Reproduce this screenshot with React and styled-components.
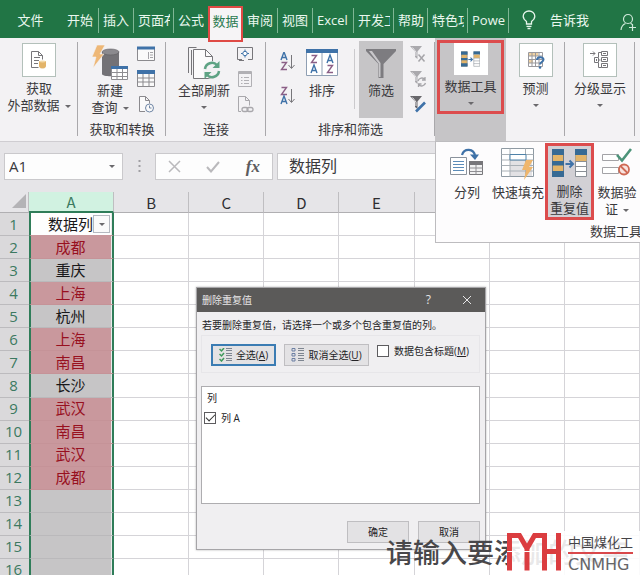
import React from "react";
import styled, { createGlobalStyle, css } from "styled-components";

const Global = createGlobalStyle`
  * { box-sizing: border-box; }
  body { margin: 0; background: #fff; }
  button, input { font: inherit; color: inherit; margin: 0; }
  svg { display: block; flex: none; }
`;

const Page = styled.div`
  display: flex;
  flex-direction: column;
  position: relative;
  height: 100vh;
  overflow: hidden;
  background: #fff;
  color: #3a393c;
  font-family: "Open Sans", "Noto Sans CJK SC", sans-serif;
  font-size: 13px;
  line-height: 17px;
`;

/* ---------- tabs ---------- */
const TabBar = styled.nav`
  display: flex;
  flex: none;
  height: 38px;
  background: #217545;
  color: #e9f7ee;
`;

const Tab = styled.button`
  width: ${(p) => p.$w}px;
  height: 25px;
  margin-top: 8px;
  padding: 0 3px 0 4px;
  border: 0;
  border-right: 1px solid ${(p) => (p.$line ? "#7fb694" : "transparent")};
  background: none;
  text-align: ${(p) => (p.$center ? "center" : "left")};
  flex: none;
  ${(p) =>
    p.$active &&
    css`
      position: relative;
      z-index: 2;
      height: 36px;
      margin-top: 6px;
      padding: 0 0 6px;
      border: 2px solid #df4a45;
      background: #f6f4f6;
      color: #2a7a4f;
      text-align: center;
    `}
`;

const TabText = styled.span`
  display: block;
  overflow: hidden;
  white-space: nowrap;
`;

const TellMe = styled.button`
  display: flex;
  align-items: center;
  gap: 14px;
  margin: 2px auto 0 13px;
  padding: 0;
  border: 0;
  background: none;
`;

const Account = styled.button`
  padding: 0;
  margin: 6px 3px 0 0;
  border: 0;
  background: none;
`;

/* ---------- ribbon ---------- */
const Ribbon = styled.div`
  display: flex;
  flex: none;
  height: 104px;
  background: #f3f2f4;
  border-bottom: 1px solid #cfcdd1;
`;

const Group = styled.section`
  position: relative;
  display: flex;
  flex-direction: column;
  flex: none;
  width: ${(p) => p.$w}px;
  background: ${(p) => (p.$open ? "#c6c5c7" : "none")};
  &::after {
    content: "";
    position: absolute;
    right: 0;
    top: 4px;
    bottom: 5px;
    width: 1px;
    background: ${(p) => (p.$open ? "transparent" : "#a9a8ab")};
  }
`;

const GroupBody = styled.div`
  display: flex;
  flex: 1;
  padding-left: ${(p) => p.$pad || 0}px;
`;

const GroupLabel = styled.div`
  height: 20px;
  text-align: center;
  white-space: nowrap;
`;

const Big = styled.button`
  display: flex;
  flex-direction: column;
  align-items: center;
  width: ${(p) => (p.$w ? p.$w + "px" : "100%")};
  height: 77px;
  margin-top: 3px;
  padding: 2px 0 0;
  border: 0;
  background: ${(p) => (p.$pressed ? "#c6c5c7" : "none")};
  white-space: nowrap;
  flex: none;
`;

const IconSlot = styled.span`
  display: flex;
  align-items: center;
  justify-content: center;
  height: 39px;
`;

const Framed = styled.button`
  display: flex;
  flex-direction: column;
  align-items: center;
  height: 74px;
  margin: 2px ${(p) => (p.$marked ? 2 : 0)}px 0;
  padding: ${(p) => (p.$marked ? 0 : 3)}px 0 0;
  flex: 1;
  border: ${(p) => (p.$marked ? "3px solid #dc4c4d" : "0")};
  background: none;
  white-space: nowrap;
`;

const Frame = styled.span`
  display: flex;
  align-items: center;
  justify-content: center;
  width: 34px;
  height: 34px;
  margin-bottom: 3px;
  border: 1px solid ${(p) => (p.$plain ? "#fff" : "#b3c0ba")};
  background: #fff;
`;

const Caret = styled.span`
  display: inline-block;
  width: 0;
  height: 0;
  vertical-align: middle;
  margin-left: ${(p) => (p.$after ? 5 : 0)}px;
  border: 3px solid transparent;
  border-top-color: #6a696c;
  border-bottom: 0;
`;

const CaretLine = styled.span`
  display: flex;
  height: 17px;
  align-items: center;
`;

const SmallStack = styled.div`
  display: flex;
  flex-direction: column;
  gap: 7px;
  margin: 7px 0 0 ${(p) => p.$ml}px;
`;

const SmallButton = styled.button`
  display: flex;
  width: 18px;
  height: 18px;
  padding: 0;
  border: 0;
  background: none;
`;

const SortStack = styled.div`
  display: flex;
  flex-direction: column;
  gap: 14px;
  margin-top: 14px;
`;

const SortButton = styled.button`
  padding: 0;
  border: 0;
  width: 16px;
  height: 20px;
  background: none;
`;

const ThinLine = styled.span`
  width: 1px;
  height: 60px;
  margin: 11px 4px 0 6px;
  background: #cbcacd;
`;

/* ---------- drop-down panel ---------- */
const Panel = styled.div`
  position: absolute;
  z-index: 5;
  left: 0;
  top: 103px;
  width: 216px;
  height: 102px;
  background: #fdfcfd;
  border: 1px solid #bdbcbf;
`;

const PanelItems = styled.div`
  display: flex;
  padding-left: 7px;
`;

const PanelButton = styled.button`
  display: flex;
  flex-direction: column;
  align-items: center;
  width: ${(p) => p.$w}px;
  height: 77px;
  margin-top: 1px;
  padding: ${(p) => (p.$marked ? 3 : 5)}px 0 0;
  border: ${(p) => (p.$marked ? "3px solid #dc4c4d" : "0")};
  background: ${(p) => (p.$marked ? "#d2d0d5" : "none")};
  white-space: nowrap;
  flex: none;
`;

const PanelIcon = styled.span`
  display: flex;
  height: ${(p) => (p.$marked ? 35 : 36)}px;
`;

const PanelLabel = styled.div`
  padding: 3px 8px 0 0;
  text-align: right;
`;

/* ---------- formula bar ---------- */
const FormulaBar = styled.div`
  display: flex;
  flex: none;
  height: 50px;
  padding: 11px 0 12px 4px;
  background: #e6e5e8;
`;

const NameBox = styled.div`
  display: flex;
  align-items: center;
  width: 119px;
  padding: 0 7px 0 4px;
  border: 1px solid #cac9cc;
  background: #fdfdfd;
  font-size: 15px;
`;

const NameInput = styled.input`
  flex: 1;
  min-width: 0;
  padding: 0;
  border: 0;
  background: none;
  outline: 0;
`;

const PlainButton = styled.button`
  display: flex;
  align-items: center;
  padding: 0;
  border: 0;
  background: none;
`;

const Grip = styled.span`
  display: flex;
  align-items: center;
  justify-content: center;
  width: 32px;
`;

const EditTools = styled.div`
  display: flex;
  align-items: center;
  justify-content: space-between;
  width: 118px;
  padding: 0 12px;
  border: 1px solid #cac9cc;
  background: #fdfdfd;
`;

const FormulaInput = styled.input`
  flex: 1;
  min-width: 0;
  margin-left: 4px !important;
  padding: 0 11px;
  border: 1px solid #cac9cc;
  border-right: 0;
  background: #fdfdfd;
  font-size: 16px !important;
  outline: 0;
`;

/* ---------- sheet ---------- */
const Sheet = styled.table`
  flex: none;
  width: 100%;
  height: 390px;
  table-layout: fixed;
  border-collapse: separate;
  border-spacing: 0;
  font-size: 15px;
  line-height: 19px;
`;

const NumCol = styled.col`
  width: 29px;
`;
const ACol = styled.col`
  width: 85px;
`;

const ColHead = styled.th`
  height: 19px;
  padding: 0;
  background: ${(p) => (p.$on ? "#d1f2e1" : "#e6e5e8")};
  color: ${(p) => (p.$on ? "#3b7a60" : "#2f2e31")};
  border-right: 1px solid #bfbec1;
  border-bottom: ${(p) => (p.$on ? "2px solid #2f7d59" : "1px solid #b0afb2")};
  font-weight: 400;
  font-family: "Noto Sans CJK SC", sans-serif;
`;

const Corner = styled.th`
  padding: 0 2px 2px 0;
  background: #e6e5e8;
  border-right: 1px solid #bfbec1;
  border-bottom: 1px solid #b0afb2;
  svg {
    margin-left: auto;
  }
`;

const RowHead = styled.th`
  padding: 0 2px 0 0;
  background: #dad9db;
  color: #3c7961;
  border-bottom: 1px solid #bcbbbe;
  font-weight: 400;
`;

const Cell = styled.td`
  padding: 0;
  border-right: 1px solid #d5d4d8;
  border-bottom: 1px solid #d5d4d8;
`;

const fills = { dup: "#c9989d", head: "#fefefe", plain: "#c6c5c6" };

const ACell = styled.td`
  padding: 0 2px 0 0;
  text-align: center;
  white-space: nowrap;
  background: ${(p) => fills[p.$kind]};
  color: ${(p) => (p.$kind === "dup" ? "#98101f" : "#19181a")};
  border-left: 2px solid #2f7d59;
  border-right: 2px solid #2f7d59;
  border-bottom: 1px solid
    ${(p) => (p.$kind === "dup" ? "#c59398" : p.$kind === "head" ? "#c9989d" : "#bab9bb")};
  box-shadow: inset -1px 0 #eceaec;
`;

const HeadCell = styled.div`
  display: flex;
  align-items: center;
  justify-content: flex-end;
`;

const FilterButton = styled.button`
  display: flex;
  align-items: center;
  justify-content: center;
  width: 17px;
  height: 18px;
  padding: 0;
  border: 1px solid #b5b9c0;
  background: #fafafa;
`;

/* ---------- dialog ---------- */
const Dialog = styled.div`
  position: absolute;
  z-index: 6;
  left: 196px;
  top: 287px;
  width: 290px;
  border: 1px solid #a6a5a8;
  background: #f0eff1;
  box-shadow: 0 0 2px rgba(0, 0, 0, 0.3);
  color: #242326;
  font-size: 10px;
  line-height: 14px;
`;

const TitleBar = styled.header`
  display: flex;
  align-items: center;
  height: 24px;
  padding: 0 13px 0 5px;
  background: #5b5a59;
  color: #e6e5e6;
`;

const Title = styled.span`
  flex: 1;
`;

const HelpButton = styled(PlainButton)`
  margin-right: 31px !important;
  font-size: 12px !important;
`;

const DialogBody = styled.div`
  padding: 6px 5px 6px 4px;
`;

const Prompt = styled.p`
  margin: 0;
  padding: 0 1px;
`;

const Options = styled.div`
  display: flex;
  align-items: flex-start;
  height: 38px;
  margin-top: 3px;
  padding: 8px 9px;
  border: 1px solid #e7e6e9;
`;

const PushButton = styled.button`
  display: flex;
  align-items: center;
  justify-content: center;
  gap: 3px;
  width: ${(p) => p.$w}px;
  height: 22px;
  padding: 0;
  border: ${(p) => (p.$focus ? "2px solid #3b7cb3" : "1px solid #bfbec1")};
  background: #e3e2e4;
  white-space: nowrap;
`;

const Access = styled.span`
  text-decoration: underline;
`;

const CheckLabel = styled.label`
  display: flex;
  align-items: center;
  gap: 5px;
  white-space: nowrap;
`;

const Check = styled.input`
  appearance: none;
  width: 12px;
  height: 12px;
  border: 1px solid #5d5c5f;
  background: #fff;
  display: grid;
  place-items: center;
  &:checked::before {
    content: "";
    width: 8px;
    height: 4px;
    margin-bottom: 3px;
    border: solid #333;
    border-width: 0 0 1px 1px;
    rotate: -45deg;
  }
`;

const ListBox = styled.div`
  height: 118px;
  margin-top: 13px;
  padding: 4px 2px;
  border: 1px solid #aeadb0;
  background: #fff;
`;

const ListHead = styled.div`
  padding: 0 3px;
  margin-bottom: 6px;
`;

const Actions = styled.div`
  display: flex;
  justify-content: flex-end;
  gap: 9px;
  margin-top: 17px;
`;

/* ---------- watermark ---------- */
const Caption = styled.div`
  position: absolute;
  z-index: 7;
  left: 386px;
  bottom: 5px;
  color: #48474a;
  font-size: 27px;
  font-weight: 500;
  line-height: 34px;
  white-space: nowrap;
`;

const Brand = styled.div`
  position: absolute;
  z-index: 8;
  right: 0;
  bottom: 0;
  display: flex;
  gap: 7px;
  width: 133px;
  height: 44px;
  padding-top: 2px;
  background: rgba(255, 255, 255, 0.88);
`;

const BrandText = styled.div`
  display: flex;
  flex-direction: column;
  color: #454447;
`;

const BrandName = styled.span`
  padding-bottom: 1px;
  border-bottom: 2px solid #d9484b;
  line-height: 18px;
  font-size: 13px;
`;

const BrandCode = styled.span`
  padding-top: 2px;
  color: #666568;
  font-family: "DejaVu Sans", sans-serif;
  font-size: 16px;
  line-height: 18px;
`;

/* ---------- icons ---------- */
const BLUE = "#3f72a8";
const GREY = "#77767a";
const TAN = "#e3b469";

const Svg = ({ w, h, children, ...rest }) => (
  <svg width={w} height={h} viewBox={`0 0 ${w} ${h}`} fill="none" aria-hidden="true" {...rest}>
    {children}
  </svg>
);

const BulbIcon = () => (
  <Svg w={14} h={20} stroke="#e6f5eb" strokeWidth="1.3">
    <path d="M4.5 14v-2.5C2.5 10 1.200 8.500 1.200 6.300a5.800 5.300 0 0 1 11.600 0c0 2.200-1.300 3.700-3.300 5.200V14z" />
    <path d="M4.500 16.300h5M5.500 18.500h3" />
  </Svg>
);

const PersonIcon = () => (
  <Svg w={17} h={19} stroke="#cfe8d9" strokeWidth="1.2">
    <circle cx="8" cy="6" r="4.500" />
    <path d="M1 17c.3-3.500 2-5.500 4.500-6.500M10.500 10.300l1.500 1M12.500 11v7M9 14.500h7" />
  </Svg>
);

const DocDataIcon = () => (
  <Svg w={18} h={20} stroke={GREY}>
    <path d="M1.500 17.500v-16h7l4 4v4M8.500 1.500v4h4M1.500 17.500h7" />
    <path d="M4 7.500h6M4 10.500h5M4 13.500h4" />
    <path d="M9.500 11.500v5c0 2 6 2 6 0v-5z" fill={TAN} stroke={TAN} />
    <ellipse cx="12.500" cy="11.500" rx="3" ry="1" fill="#f3d9a8" stroke="none" />
  </Svg>
);

const QueryIcon = () => (
  <Svg w={36} h={36}>
    <path d="M10 7v22c0 3 17 3 17 0V7z" fill="#737276" />
    <ellipse cx="18.500" cy="7" rx="8.500" ry="3" fill="#8b8a8e" stroke="#5f5e62" strokeWidth=".6" />
    <path d="M5 0h8L8 9h4L1 23l3-11H0z" fill="#eeb877" stroke="#f3f2f4" strokeWidth=".6" />
    <path d="M19.500 21.500h16v13h-16z" fill="#fff" stroke="#8e8d91" />
    <path d="M19 21h17v3H19z" fill={BLUE} />
    <path d="M19.500 27.500h16M19.500 31.500h16M25 24v10M30.500 24v10" stroke="#8e8d91" />
  </Svg>
);

const WindowIcon = () => (
  <Svg w={18} h={18}>
    <path d="M.5 2.500h17v13H.5z" fill="#fafafa" stroke="#8b8a8e" />
    <path d="M0 1.500h18v3H0z" fill={BLUE} />
    <path d="M11.500 7v7M13 7.500h3M13 10h3M13 12.500h3" stroke="#a5a4a8" />
  </Svg>
);

const GridIcon = () => (
  <Svg w={18} h={18}>
    <path d="M.5 1.500h17v15H.5z" fill="#fafafa" stroke="#8b8a8e" />
    <path d="M0 0h18v4H0z" fill={BLUE} />
    <path d="M.5 8h17M.5 12h17M6 4v12.500M12 4v12.500" stroke="#8b8a8e" />
  </Svg>
);

const RecentIcon = () => (
  <Svg w={18} h={18} stroke="#8b8a8e">
    <path d="M8 16.500H2.500V1.500h6l4 4v3M8.500 1.500v4h4" fill="#fafafa" />
    <circle cx="12.500" cy="13" r="4" fill="#fafafa" stroke="#6f86a5" />
    <path d="M12.500 10.500V13h2" stroke="#6f86a5" />
  </Svg>
);

const RefreshIcon = () => (
  <Svg w={34} h={36} stroke={GREY}>
    <path d="M1.500 28V2.500h8M4.500 30V5" />
    <path d="M6.500 33.500V4.500h12l7 7v22z" fill="#fbfafb" />
    <path d="M18.500 4.500v7h7" />
    <circle cx="25" cy="25" r="9" fill="#f3f2f4" stroke="none" />
    <path d="M18 24a7 7 0 0 1 12-4M32 26a7 7 0 0 1-12 4" stroke="#5ea384" strokeWidth="2.500" />
    <path d="M32.500 16v7h-7zM17.500 34v-7h7z" fill="#5ea384" stroke="none" />
  </Svg>
);

const ConnectIcon = () => (
  <Svg w={18} h={18} stroke="#77767a">
    <path d="M6 14.500H1.500V2.500h15v12H12" />
    <path d="M9 4.500v8M5 8.500h8" stroke={BLUE} />
    <circle cx="9" cy="8.500" r="2.200" fill="#fff" stroke={BLUE} />
    <path d="M3 15.500h5" />
  </Svg>
);

const PropsIcon = () => (
  <Svg w={18} h={18} stroke="#b1b0b4">
    <path d="M2.500 1.500h13v15h-13z" />
    <path d="M2.500 3h13" strokeWidth="2" />
    <path d="M5 7.500h1.500M8 7.500h5M5 10.500h1.500M8 10.500h5M5 13.500h1.500M8 13.500h5" />
  </Svg>
);

const LinksIcon = () => (
  <Svg w={18} h={18} stroke="#a9a8ac">
    <path d="M5 16.500H2.500V1.500h7l4 4v5M9.500 1.500v4h4" />
    <rect x="6" y="12.500" width="6" height="4" rx="2" strokeWidth="1.300" />
    <rect x="11" y="12.500" width="6" height="4" rx="2" strokeWidth="1.300" />
  </Svg>
);

const LetterA = ({ x, y, c }) => (
  <path d={`M${x} ${y + 8}l3-8 3 8m-5-2.500h4`} stroke={c} strokeWidth="1.400" />
);
const LetterZ = ({ x, y, c }) => (
  <path d={`M${x} ${y + 0.5}h5l-5 7h5.500`} stroke={c} strokeWidth="1.400" />
);

const SortIcon = ({ desc }) => (
  <Svg w={16} h={20}>
    {desc ? <LetterZ x={1.5} y={1} c="#8b5f86" /> : <LetterA x={1} y={0} c={BLUE} />}
    {desc ? <LetterA x={1} y={10} c={BLUE} /> : <LetterZ x={1.5} y={10} c="#8b5f86" />}
    <path d="M11.500 3v13M8.500 13l3 3.500 3-3.500" stroke={GREY} />
  </Svg>
);

const SortDialogIcon = () => (
  <Svg w={32} h={28}>
    <path d="M.5.5h31v26H.5z" fill="#fff" stroke="#8f9fb3" />
    <path d="M0 0h32v4H0z" fill={BLUE} />
    <path d="M16 4v23" stroke="#8f9fb3" />
    <LetterZ x={5.500} y={6} c="#8b5f86" />
    <LetterA x={5} y={16} c={BLUE} />
    <LetterA x={21} y={6} c={BLUE} />
    <LetterZ x={21.500} y={16} c="#8b5f86" />
  </Svg>
);

const FunnelIcon = () => (
  <Svg w={32} h={32}>
    <path d="M1 2h30v2L18.500 17v14h-5V17L1 4z" fill="#7d7c80" />
    <path d="M4 4h3l8.500 12v14H14V17z" fill="#c8c7ca" />
  </Svg>
);

const SmallFunnelIcon = ({ kind }) => (
  <Svg w={18} h={18}>
    <path d="M1 1h12L8.500 6.500V14L6 12V6.500z" fill={kind === "edit" ? "#68676b" : "#aaa9ad"} />
    <path d="M3.500 2.500L7 7v4" stroke="#e8e7ea" />
    {kind === "clear" && <path d="M9.500 9.500l6 7M15.500 9.500l-6 7" stroke="#a5a4a8" strokeWidth="1.500" />}
    {kind === "redo" && (
      <path d="M9 11a4 4 0 0 1 7-1.500V7m0 3h-3M16.500 13a4 4 0 0 1-7 1.500V17m0-3h3" stroke="#a5a4a8" strokeWidth="1.300" />
    )}
    {kind === "edit" && <path d="M7 16.500L16 7.500" stroke={BLUE} strokeWidth="2.600" />}
  </Svg>
);

const DedupeIcon = ({ w, h }) => (
  <svg width={w} height={h} viewBox="0 0 35 28" fill="none" aria-hidden="true">
    <path d="M.5.500h11v27H.5z" fill={TAN} stroke="#6d7a86" />
    <path d="M0 0h12v6H0zM0 12h12v4.500H0zM0 22h12v6H0z" fill="#376a94" />
    <path d="M23.500.500h11v27h-11z" fill="#fff" stroke="#8a8f96" />
    <path d="M23 0h12v6H23z" fill="#376a94" />
    <path d="M23.500 6h11v6h-11z" fill={TAN} />
    <path d="M23.500 12.500h11M23.500 17.500h11M23.500 22.500h11" stroke="#8a8f96" />
    <path d="M13.500 15h7M17.500 11.500L21 15l-3.500 3.500" stroke={BLUE} strokeWidth="2" />
  </svg>
);

const ForecastIcon = () => (
  <Svg w={18} h={18}>
    <path d="M1.500 1.500h14v14h-14z" fill="#fff" stroke="#9a999d" />
    <path d="M2 2h9v3H2zM2 9h4v3H2z" fill="#f0d2a2" />
    <path d="M1.500 5h14M1.500 8.500h14M1.500 12h14M5 1.500v14M8.500 1.500v14M12 1.500v14" stroke="#9a999d" />
    <path d="M10 9c0-3.500 6.500-3.500 6.500-.5 0 2.500-3.500 2.500-3.500 5" stroke={BLUE} strokeWidth="2" />
    <circle cx="13" cy="16.500" r="1.300" fill={BLUE} />
  </Svg>
);

const OutlineIcon = () => (
  <Svg w={20} h={18} stroke={GREY}>
    <path d="M0 2.500h5M3 .5l2 2-2 2" />
    <path d="M4.500 6.500h4v5h-4zM6.500 8v2M8.500 9h2M8.500 6V1.500h3M8.500 12v4.500h3" />
    <path d="M11.500.5h6v4h-6zM11.500 6.500h6v4h-6zM11.500 12.500h6v4h-6zM13 2.500h3M13 8.500h3M13 14.500h3" />
  </Svg>
);

const SplitIcon = () => (
  <Svg w={34} h={28}>
    <path d="M.5 9.500h16v17H.5z" fill="#fff" stroke="#8a929c" />
    <path d="M3 13.500h11M3 16.500h11M3 19.500h11M3 22.500h11" stroke="#5c8cb9" />
    <path d="M12 7c2-7 12-7 13 1" stroke={BLUE} strokeWidth="2.200" />
    <path d="M20 6.500h9L25 12z" fill={BLUE} />
    <path d="M19.500 14.500h13v12h-13z" fill="#f1f1f2" stroke="#77767a" />
    <path d="M19 13h14v4H19z" fill="#77767a" />
    <path d="M19.500 20h13M19.500 23.500h13M26 17v9.500" stroke="#8f8e92" />
  </Svg>
);

const FlashIcon = () => (
  <Svg w={34} h={32}>
    <path d="M.5.500h32v28H.5z" fill="#fff" stroke="#8f9aa3" />
    <path d="M9 12h22v16H9z" fill="#e2e1e4" />
    <path d="M.5 6.500h32M.5 12h32M.5 17.500h32M.5 23h32M9 .5v28M24.500.500v28" stroke="#a9b0b6" />
    <path d="M9 6.500h16V12H9z" fill="#fff" stroke="#4f82a8" />
    <path d="M25 12h7l-4 7h4l-9 13 2-10h-4z" fill="#efb66c" />
  </Svg>
);

const ValidateIcon = () => (
  <Svg w={30} h={28}>
    <path d="M.5 6.500h16v6H.5zM.5 19.500h16v6H.5z" fill="#fff" stroke="#a3a2a6" />
    <path d="M15 7l5 5.500L29 1" stroke="#4c9379" strokeWidth="2.600" />
    <circle cx="22" cy="21.500" r="5" fill="#f8e3df" stroke="#cf6a55" strokeWidth="1.800" />
    <path d="M18.500 18l7 7" stroke="#cf6a55" strokeWidth="1.800" />
  </Svg>
);

const CrossIcon = ({ size, color, weight }) => (
  <Svg w={size} h={size} stroke={color} strokeWidth={weight}>
    <path d={`M1 1L${size - 1} ${size - 1}M${size - 1} 1L1 ${size - 1}`} />
  </Svg>
);

const ListIcon = ({ on }) => (
  <Svg w={14} h={14}>
    {[1, 6, 11].map((y) => (
      <React.Fragment key={y}>
        {on ? (
          <path d={`M.5 ${y}l2 2 2.500-3`} stroke="#3f9a5c" strokeWidth="1.500" />
        ) : (
          <path d={`M1 ${y - 0.5}h3v2.500H1z`} stroke="#6b7fa3" />
        )}
        <path d={`M7 ${y - 0.5}h6M7 ${y + 1.500}h6`} stroke="#7d8590" />
      </React.Fragment>
    ))}
  </Svg>
);

const MonogramIcon = () => (
  <svg width="54" height="38" viewBox="0 0 54 38" fill="none" aria-hidden="true">
    <path
      d="M2.500 37.500V2.500h10l7.500 13 7.500-13h10M20 14v23.500M37.500 0v37.500M51.500 0v37.500M37.500 18.500h14"
      stroke="#db3d40"
      strokeWidth="5"
    />
    <path d="M0 18.500h34" stroke="#fff" strokeWidth="1" />
  </svg>
);

/* ---------- data ---------- */
const tabs = [
  { t: "文件", w: 61, center: true },
  { t: "开始", w: 38, line: true, pad: true },
  { t: "插入", w: 35, line: true },
  { t: "页面布", w: 40, line: true },
  { t: "公式", w: 34 },
  { t: "数据", w: 35, active: true },
  { t: "审阅", w: 35, line: true },
  { t: "视图", w: 35, line: true },
  { t: "Excel", w: 41, line: true },
  { t: "开发工", w: 40, line: true },
  { t: "帮助", w: 34, line: true },
  { t: "特色功", w: 40, line: true },
  { t: "Powe", w: 41, line: true },
];

const rows = [
  ["数据列", "head"],
  ["成都", "dup"],
  ["重庆", "plain"],
  ["上海", "dup"],
  ["杭州", "plain"],
  ["上海", "dup"],
  ["南昌", "dup"],
  ["长沙", "plain"],
  ["武汉", "dup"],
  ["南昌", "dup"],
  ["武汉", "dup"],
  ["成都", "dup"],
  ["", "plain"],
  ["", "plain"],
  ["", "plain"],
  ["", "plain"],
];

const letters = ["B", "C", "D", "E", "F", "G", "H"];

function RibbonBar() {
  return (
    <Ribbon>
      <Group $w={78}>
        <GroupBody>
          <Framed>
            <Frame><DocDataIcon /></Frame>
            <span>获取</span>
            <span>外部数据<Caret $after /></span>
          </Framed>
        </GroupBody>
      </Group>
      <Group $w={88}>
        <GroupBody $pad={10}>
          <Big $w={44}>
            <IconSlot><QueryIcon /></IconSlot>
            <span>新建</span>
            <span>查询<Caret $after /></span>
          </Big>
          <SmallStack $ml={5}>
            <SmallButton aria-label="显示查询"><WindowIcon /></SmallButton>
            <SmallButton aria-label="从表格"><GridIcon /></SmallButton>
            <SmallButton aria-label="最近使用的源"><RecentIcon /></SmallButton>
          </SmallStack>
        </GroupBody>
        <GroupLabel>获取和转换</GroupLabel>
      </Group>
      <Group $w={100}>
        <GroupBody $pad={11}>
          <Big $w={54}>
            <IconSlot><RefreshIcon /></IconSlot>
            <span>全部刷新</span>
            <CaretLine><Caret /></CaretLine>
          </Big>
          <SmallStack $ml={5}>
            <SmallButton aria-label="连接"><ConnectIcon /></SmallButton>
            <SmallButton aria-label="属性"><PropsIcon /></SmallButton>
            <SmallButton aria-label="编辑链接"><LinksIcon /></SmallButton>
          </SmallStack>
        </GroupBody>
        <GroupLabel>连接</GroupLabel>
      </Group>
      <Group $w={169}>
        <GroupBody $pad={14}>
          <SortStack>
            <SortButton aria-label="升序"><SortIcon /></SortButton>
            <SortButton aria-label="降序"><SortIcon desc /></SortButton>
          </SortStack>
          <Big $w={52}>
            <IconSlot><SortDialogIcon /></IconSlot>
            <span>排序</span>
          </Big>
          <ThinLine />
          <Big $w={44} $pressed>
            <IconSlot><FunnelIcon /></IconSlot>
            <span>筛选</span>
          </Big>
          <SmallStack $ml={6}>
            <SmallButton aria-label="清除"><SmallFunnelIcon kind="clear" /></SmallButton>
            <SmallButton aria-label="重新应用"><SmallFunnelIcon kind="redo" /></SmallButton>
            <SmallButton aria-label="高级"><SmallFunnelIcon kind="edit" /></SmallButton>
          </SmallStack>
        </GroupBody>
        <GroupLabel>排序和筛选</GroupLabel>
      </Group>
      <Group $w={71} $open>
        <GroupBody>
          <Framed $marked>
            <Frame $plain><DedupeIcon w={19} h={16} /></Frame>
            <span>数据工具</span>
            <CaretLine><Caret /></CaretLine>
          </Framed>
        </GroupBody>
        <Panel>
          <PanelItems>
            <PanelButton $w={48}>
              <PanelIcon><SplitIcon /></PanelIcon>
              <span>分列</span>
            </PanelButton>
            <PanelButton $w={54}>
              <PanelIcon><FlashIcon /></PanelIcon>
              <span>快速填充</span>
            </PanelButton>
            <PanelButton $w={49} $marked>
              <PanelIcon $marked><DedupeIcon w={35} h={28} /></PanelIcon>
              <span>删除</span>
              <span>重复值</span>
            </PanelButton>
            <PanelButton $w={46}>
              <PanelIcon><ValidateIcon /></PanelIcon>
              <span>数据验</span>
              <span>证<Caret $after /></span>
            </PanelButton>
          </PanelItems>
          <PanelLabel>数据工具</PanelLabel>
        </Panel>
      </Group>
      <Group $w={59}>
        <GroupBody>
          <Framed>
            <Frame><ForecastIcon /></Frame>
            <span>预测</span>
            <CaretLine><Caret /></CaretLine>
          </Framed>
        </GroupBody>
      </Group>
      <Group $w={70}>
        <GroupBody>
          <Framed>
            <Frame><OutlineIcon /></Frame>
            <span>分级显示</span>
            <CaretLine><Caret /></CaretLine>
          </Framed>
        </GroupBody>
      </Group>
    </Ribbon>
  );
}

function SheetTable() {
  return (
    <Sheet>
      <colgroup>
        <NumCol />
        <ACol />
        {letters.map((l) => <col key={l} />)}
      </colgroup>
      <thead>
        <tr>
          <Corner>
            <Svg w={14} h={14}><path d="M14 0v14H0z" fill="#b4b3b6" /></Svg>
          </Corner>
          <ColHead $on>A</ColHead>
          {letters.map((l) => <ColHead key={l}>{l}</ColHead>)}
        </tr>
      </thead>
      <tbody>
        {rows.map(([text, kind], i) => (
          <tr key={i}>
            <RowHead>{i + 1}</RowHead>
            <ACell $kind={kind}>
              {kind === "head" ? (
                <HeadCell>
                  {text}
                  <FilterButton aria-label="筛选数据列"><Caret /></FilterButton>
                </HeadCell>
              ) : text}
            </ACell>
            {letters.map((l) => <Cell key={l} />)}
          </tr>
        ))}
      </tbody>
    </Sheet>
  );
}

function DedupeDialog() {
  return (
    <Dialog role="dialog" aria-labelledby="dlg-title">
      <TitleBar>
        <Title id="dlg-title">删除重复值</Title>
        <HelpButton>?</HelpButton>
        <PlainButton aria-label="关闭"><CrossIcon size={10} color="#e6e5e6" weight={1} /></PlainButton>
      </TitleBar>
      <DialogBody>
        <Prompt>若要删除重复值，请选择一个或多个包含重复值的列。</Prompt>
        <Options>
          <PushButton $w={65} $focus>
            <ListIcon on />
            <span>全选(<Access>A</Access>)</span>
          </PushButton>
          <OptionGap />
          <PushButton $w={85}>
            <ListIcon />
            <span>取消全选(<Access>U</Access>)</span>
          </PushButton>
          <OptionGap />
          <CheckLabel>
            <Check type="checkbox" />
            <span>数据包含标题(<Access>M</Access>)</span>
          </CheckLabel>
        </Options>
        <ListBox>
          <ListHead>列</ListHead>
          <CheckLabel>
            <Check type="checkbox" defaultChecked />
            <span>列 A</span>
          </CheckLabel>
        </ListBox>
        <Actions>
          <PushButton $w={62}>确定</PushButton>
          <PushButton $w={62}>取消</PushButton>
        </Actions>
      </DialogBody>
    </Dialog>
  );
}

const OptionGap = styled.span`
  width: 8px;
  flex: none;
`;

const Fx = styled.span`
  font-family: "Liberation Serif", serif;
  font-size: 17px;
  font-style: italic;
  font-weight: 700;
  color: #5c5b5e;
`;

export default function App() {
  return (
    <Page>
      <Global />
      <TabBar>
        {tabs.map((x) => (
          <Tab key={x.t} $w={x.w} $line={x.line} $active={x.active} $center={x.center || x.pad}>
            <TabText>{x.t}</TabText>
          </Tab>
        ))}
        <TellMe><BulbIcon />告诉我</TellMe>
        <Account aria-label="共享"><PersonIcon /></Account>
      </TabBar>
      <RibbonBar />
      <FormulaBar>
        <NameBox>
          <NameInput aria-label="名称框" defaultValue="A1" />
          <PlainButton aria-label="选择名称"><Caret /></PlainButton>
        </NameBox>
        <Grip>
          <Svg w={3} h={13}>
            <path d="M.5 0h2v2h-2zM.5 5h2v2h-2zM.5 10h2v2h-2z" fill="#a09fa3" />
          </Svg>
        </Grip>
        <EditTools>
          <PlainButton aria-label="取消输入"><CrossIcon size={13} color="#bab9bc" weight={1.5} /></PlainButton>
          <PlainButton aria-label="输入">
            <Svg w={14} h={12} stroke="#bab9bc" strokeWidth="2"><path d="M1 6l4 4.500L13 1" /></Svg>
          </PlainButton>
          <PlainButton><Fx>fx</Fx></PlainButton>
        </EditTools>
        <FormulaInput aria-label="编辑栏" defaultValue="数据列" />
      </FormulaBar>
      <SheetTable />
      <DedupeDialog />
      <Caption>请输入要添加的文字</Caption>
      <Brand>
        <MonogramIcon />
        <BrandText>
          <BrandName>中国煤化工</BrandName>
          <BrandCode>CNMHG</BrandCode>
        </BrandText>
      </Brand>
    </Page>
  );
}
